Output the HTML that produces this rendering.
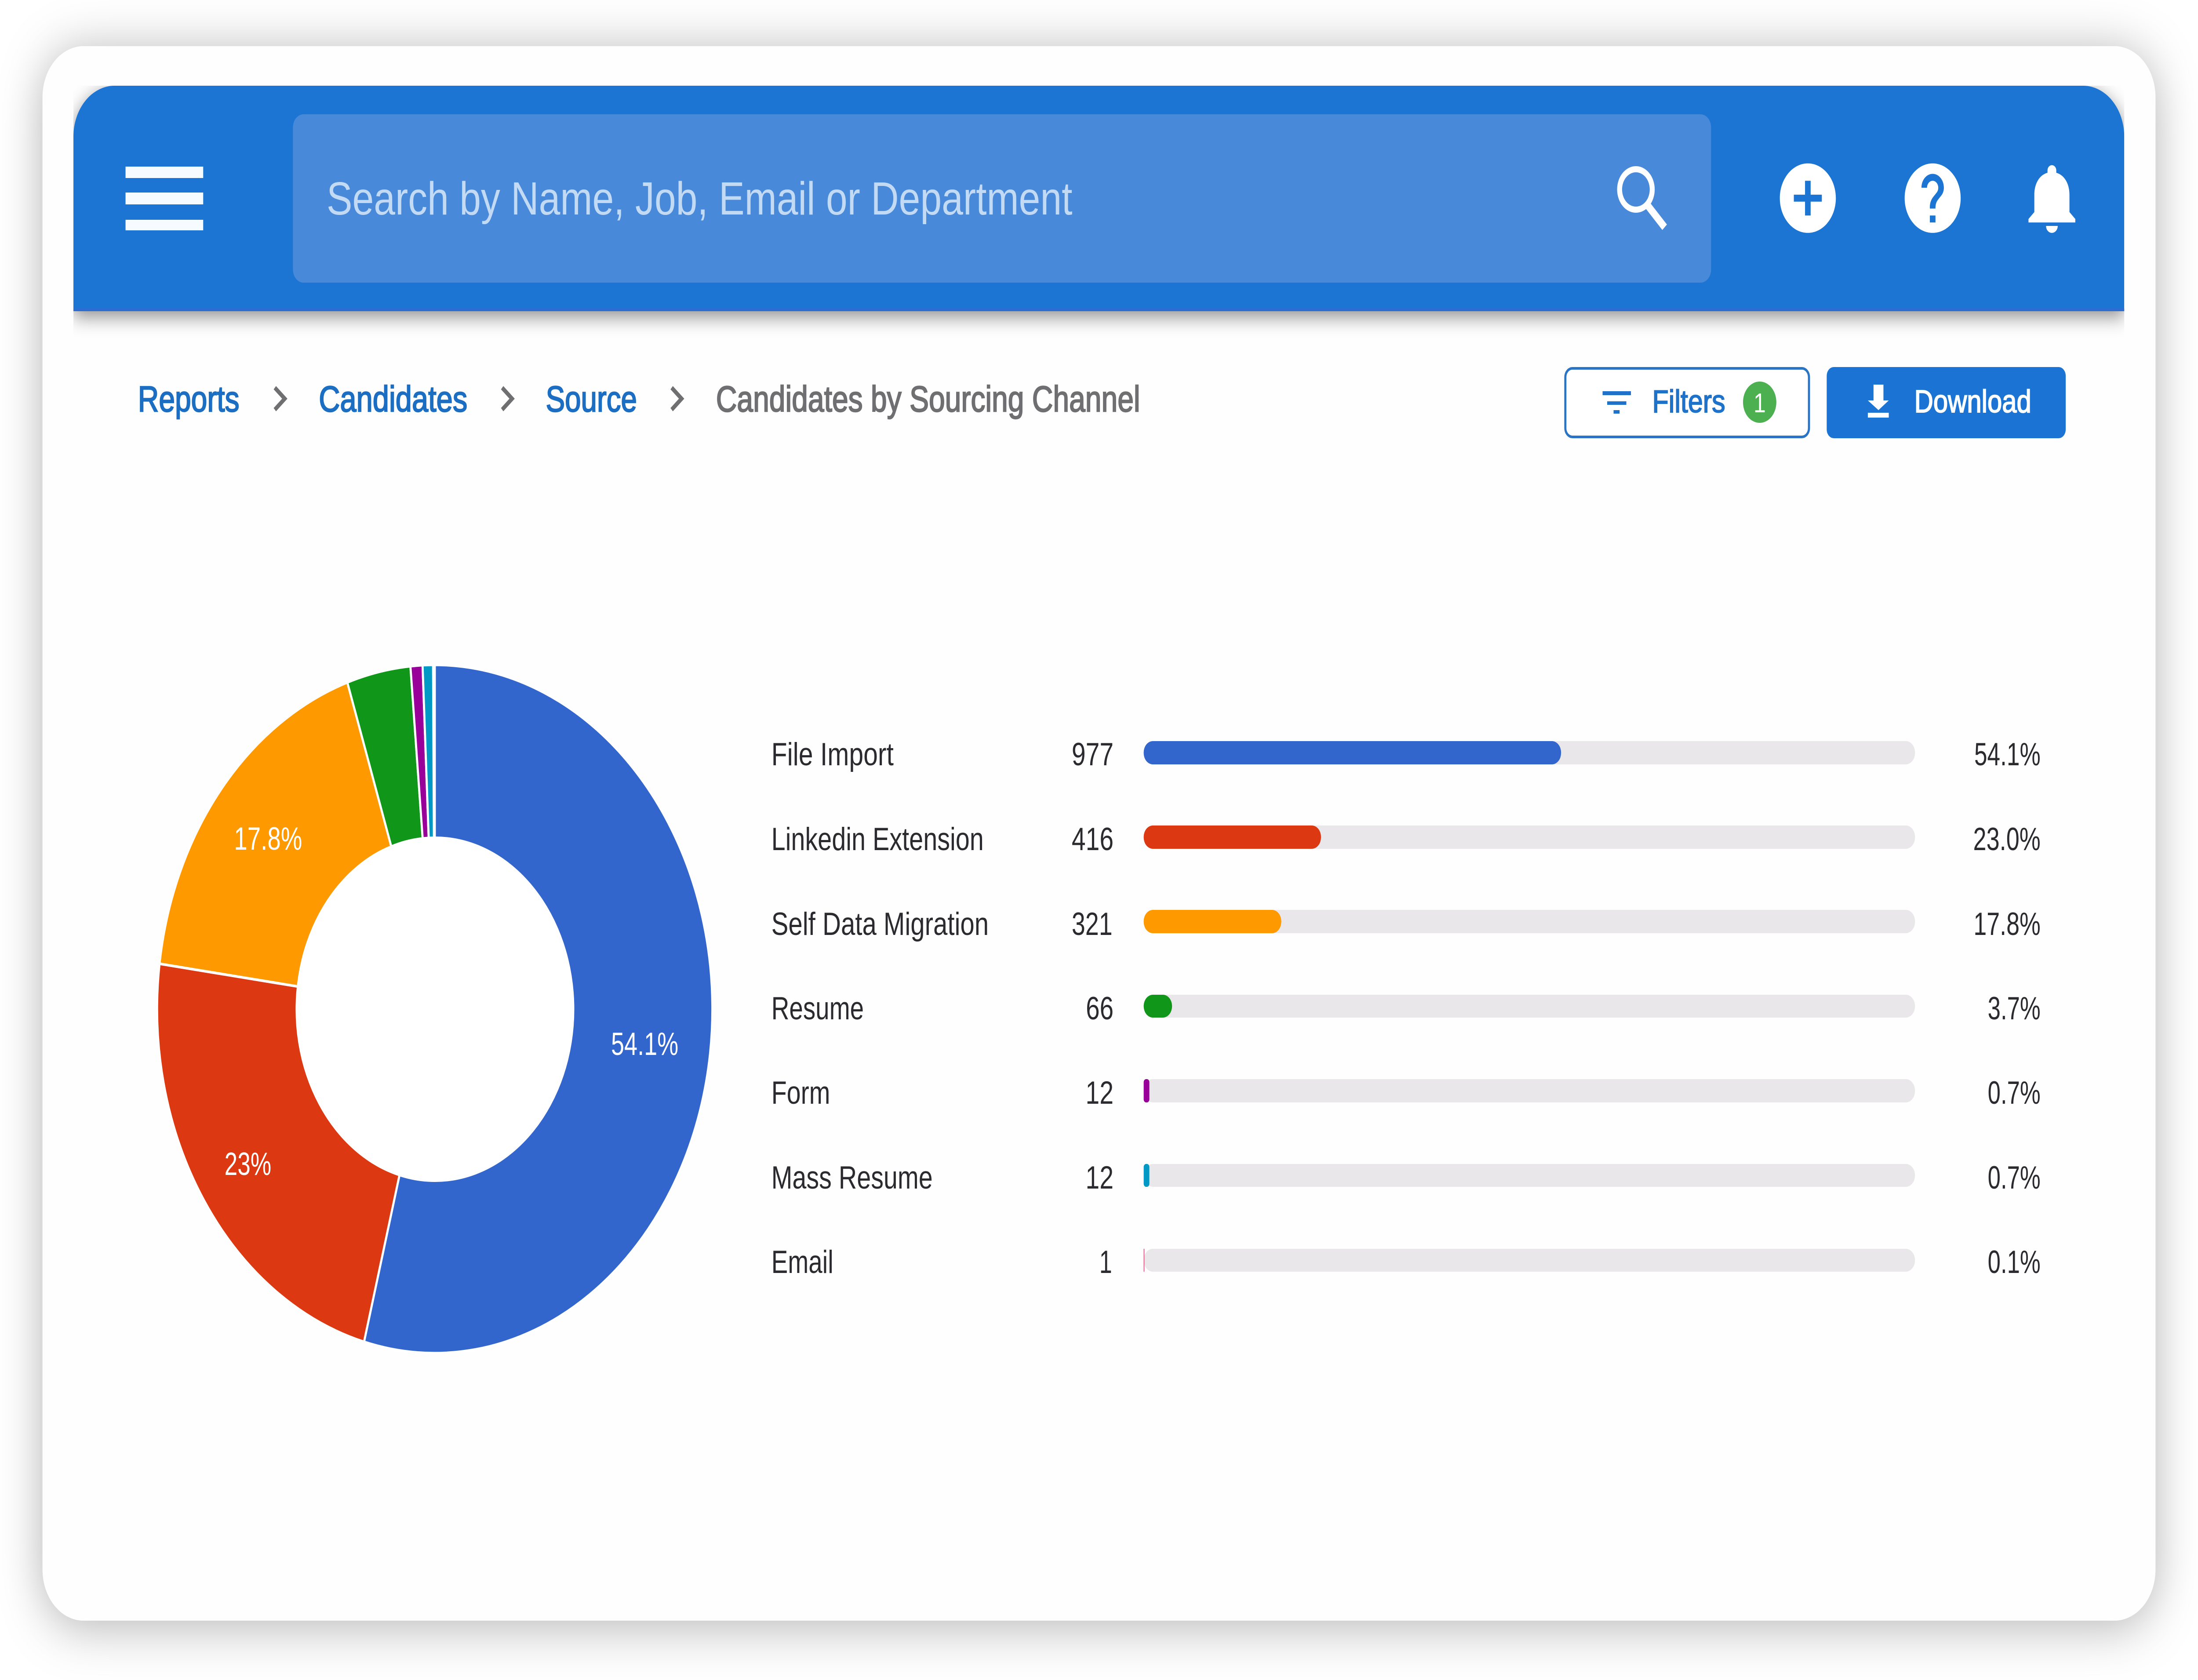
<!DOCTYPE html>
<html lang="en">
<head>
<meta charset="utf-8">
<title>Candidates by Sourcing Channel</title>
<style>
html,body{margin:0;padding:0;background:#fff;width:100%;height:100%;overflow:hidden}
svg{position:absolute;left:0;top:0;width:100%;height:100%;display:block}
text{font-family:"Liberation Sans",Arial,sans-serif}
</style>
</head>
<body>
<svg viewBox="0 0 6198 3822" preserveAspectRatio="none" xmlns="http://www.w3.org/2000/svg">
  <defs>
    <filter id="cardShadow" filterUnits="userSpaceOnUse" x="0" y="0" width="6198" height="3822">
      <feDropShadow dx="0" dy="12" stdDeviation="60" flood-color="#000" flood-opacity=".3"/>
    </filter>
    <filter id="headShadow" filterUnits="userSpaceOnUse" x="100" y="100" width="6000" height="800">
      <feDropShadow dx="0" dy="12" stdDeviation="22" flood-color="#000" flood-opacity=".45"/>
    </filter>
    <clipPath id="headClip"><rect x="207" y="195" width="5783" height="575"/></clipPath>
  </defs>

  <!-- card -->
  <rect x="120" y="105" width="5958" height="3582" rx="116" ry="116" fill="#fefefe" filter="url(#cardShadow)"/>

  <!-- header -->
  <g clip-path="url(#headClip)">
    <path d="M207 708V311A116 116 0 0 1 323 195H5874A116 116 0 0 1 5990 311V708Z" fill="#1b74d3" filter="url(#headShadow)"/>
  </g>
  <rect x="207" y="702" width="5783" height="6" fill="#2d6cd2"/>

  <!-- hamburger -->
  <rect x="354" y="379" width="219" height="26" fill="#f5fbff"/>
  <rect x="354" y="438" width="219" height="27" fill="#f5fbff"/>
  <rect x="354" y="500" width="219" height="24" fill="#f5fbff"/>

  <!-- search -->
  <rect x="826" y="260" width="3999" height="383" rx="30" fill="#4889d9"/>
  <text x="921" y="488" font-size="106" fill="#c3daf5" textLength="2103" lengthAdjust="spacingAndGlyphs">Search by Name, Job, Email or Department</text>
  <circle cx="4613" cy="431" r="46" fill="none" stroke="#fff" stroke-width="14"/>
  <path d="M4645 466L4694 517" fill="none" stroke="#fff" stroke-width="18"/>

  <!-- add -->
  <g transform="translate(5003,356) scale(7.9)"><path fill="#fff" d="M12 2C6.48 2 2 6.48 2 12s4.48 10 10 10 10-4.48 10-10S17.52 2 12 2zm5 11h-4v4h-2v-4H7v-2h4V7h2v4h4v2z"/></g>
  <!-- help -->
  <g transform="translate(5355,356) scale(7.9)"><path fill="#fff" d="M12 2C6.48 2 2 6.48 2 12s4.48 10 10 10 10-4.48 10-10S17.52 2 12 2zm1 17h-2v-2h2v2zm2.07-7.75l-.9.92C13.45 12.9 13 13.5 13 15h-2v-.5c0-1.1.45-2.1 1.17-2.83l1.24-1.26c.37-.36.59-.86.59-1.41 0-1.1-.9-2-2-2s-2 .9-2 2H8c0-2.21 1.79-4 4-4s4 1.79 4 4c0 .88-.36 1.68-.93 2.25z"/></g>
  <!-- bell -->
  <g transform="translate(5687,356) scale(8.25,7.9)"><path fill="#fff" d="M12 22c1.1 0 2-.9 2-2h-4c0 1.1.9 2 2 2zm6-6v-5c0-3.07-1.64-5.64-4.5-6.32V4c0-.83-.67-1.5-1.5-1.5s-1.5.67-1.5 1.5v.68C7.63 5.36 6 7.92 6 11v5l-2 2v1h16v-1l-2-2z"/></g>

  <!-- breadcrumbs -->
  <g font-size="83" fill="#1b6ec2" stroke="#1b6ec2" stroke-width="2.4">
    <text x="389" y="936" textLength="286" lengthAdjust="spacingAndGlyphs">Reports</text>
    <text x="899" y="936" textLength="419" lengthAdjust="spacingAndGlyphs">Candidates</text>
    <text x="1539" y="936" textLength="257" lengthAdjust="spacingAndGlyphs">Source</text>
  </g>
  <text x="2019" y="936" font-size="83" fill="#6f6f72" stroke="#6f6f72" stroke-width="2.4" textLength="1196" lengthAdjust="spacingAndGlyphs">Candidates by Sourcing Channel</text>
  <g fill="none" stroke="#6f6f72" stroke-width="10">
    <path d="M775 882L803 907L775 932"/>
    <path d="M1416 882L1444 907L1416 932"/>
    <path d="M1894 882L1922 907L1894 932"/>
  </g>

  <!-- filters button -->
  <rect x="4414" y="838" width="687" height="156" rx="20" fill="#fff" stroke="#2a74c5" stroke-width="6"/>
  <rect x="4519" y="890" width="80" height="9" fill="#1f72c9"/>
  <rect x="4532" y="913" width="54" height="8" fill="#1f72c9"/>
  <rect x="4550" y="933" width="17" height="8" fill="#1f72c9"/>
  <text x="4659" y="938" font-size="72" fill="#1f72c9" stroke="#1f72c9" stroke-width="2" textLength="206" lengthAdjust="spacingAndGlyphs">Filters</text>
  <circle cx="4962" cy="915" r="47" fill="#4caf50"/>
  <text x="4962" y="938" font-size="62" fill="#fff" text-anchor="middle">1</text>

  <!-- download button -->
  <rect x="5151" y="835" width="674" height="162" rx="20" fill="#1b74d3"/>
  <path fill="#fff" d="M5283 875H5311V911H5326L5297 933L5267 911H5283Z"/>
  <rect x="5267" y="939" width="59" height="11" fill="#fff"/>
  <text x="5398" y="938" font-size="72" fill="#fff" stroke="#fff" stroke-width="2" textLength="330" lengthAdjust="spacingAndGlyphs">Download</text>

  <!-- donut -->
  <g stroke="#fff" stroke-width="6" stroke-linejoin="round">
    <path fill="#3366cc" d="M1226 2295.5L1226 1512.5A783 783 0 1 1 1026.5 3052.7Z"/>
    <path fill="#dc3912" d="M1226 2295.5L1026.5 3052.7A783 783 0 0 1 449.8 2192.5Z"/>
    <path fill="#ff9900" d="M1226 2295.5L449.8 2192.5A783 783 0 0 1 979.4 1552.4Z"/>
    <path fill="#109618" d="M1226 2295.5L979.4 1552.4A783 783 0 0 1 1157.3 1515.6Z"/>
    <path fill="#990099" d="M1226 2295.5L1157.3 1515.6A783 783 0 0 1 1191.5 1513.3Z"/>
    <path fill="#0099c6" d="M1226 2295.5L1191.5 1513.3A783 783 0 0 1 1221.1 1512.5Z"/>
  </g>
  <circle cx="1226.5" cy="2296" r="393" fill="#fff"/>
  <g font-size="73" fill="#fff">
    <text x="1723" y="2400" textLength="190" lengthAdjust="spacingAndGlyphs">54.1%</text>
    <text x="633" y="2673" textLength="132" lengthAdjust="spacingAndGlyphs">23%</text>
    <text x="660" y="1933" textLength="192" lengthAdjust="spacingAndGlyphs">17.8%</text>
  </g>

  <!-- tracks -->
  <g fill="#e9e7ea">
    <rect x="3225" y="1686" width="2175" height="53" rx="26"/>
    <rect x="3225" y="1878" width="2175" height="53" rx="26"/>
    <rect x="3225" y="2070" width="2175" height="53" rx="26"/>
    <rect x="3225" y="2263" width="2175" height="52" rx="26"/>
    <rect x="3225" y="2455" width="2175" height="53" rx="26"/>
    <rect x="3225" y="2648" width="2175" height="52" rx="26"/>
    <rect x="3225" y="2841" width="2175" height="52" rx="26"/>
  </g>
  <!-- fills -->
  <rect x="3225" y="1686" width="1177" height="53" rx="26" fill="#3366cc"/>
  <rect x="3225" y="1878" width="500" height="53" rx="26" fill="#dc3912"/>
  <rect x="3225" y="2070" width="388" height="53" rx="26" fill="#ff9900"/>
  <rect x="3225" y="2263" width="80" height="52" rx="26" fill="#109618"/>
  <rect x="3225" y="2455" width="16" height="53" rx="7" fill="#990099"/>
  <rect x="3225" y="2648" width="16" height="52" rx="7" fill="#0099c6"/>
  <rect x="3225" y="2841" width="2" height="52" fill="#dd4477"/>

  <!-- labels -->
  <g font-size="73" fill="#2a2a2f">
    <text x="2175" y="1741" textLength="345" lengthAdjust="spacingAndGlyphs">File Import</text>
    <text x="2175" y="1934" textLength="599" lengthAdjust="spacingAndGlyphs">Linkedin Extension</text>
    <text x="2175" y="2127" textLength="613" lengthAdjust="spacingAndGlyphs">Self Data Migration</text>
    <text x="2175" y="2319" textLength="261" lengthAdjust="spacingAndGlyphs">Resume</text>
    <text x="2175" y="2511" textLength="166" lengthAdjust="spacingAndGlyphs">Form</text>
    <text x="2175" y="2704" textLength="455" lengthAdjust="spacingAndGlyphs">Mass Resume</text>
    <text x="2175" y="2896" textLength="175" lengthAdjust="spacingAndGlyphs">Email</text>

    <text x="3022" y="1741" textLength="118" lengthAdjust="spacingAndGlyphs">977</text>
    <text x="3022" y="1934" textLength="118" lengthAdjust="spacingAndGlyphs">416</text>
    <text x="3022" y="2127" textLength="115" lengthAdjust="spacingAndGlyphs">321</text>
    <text x="3062" y="2319" textLength="78" lengthAdjust="spacingAndGlyphs">66</text>
    <text x="3061" y="2511" textLength="79" lengthAdjust="spacingAndGlyphs">12</text>
    <text x="3061" y="2704" textLength="79" lengthAdjust="spacingAndGlyphs">12</text>
    <text x="3100" y="2896" textLength="36" lengthAdjust="spacingAndGlyphs">1</text>

    <text x="5567" y="1741" textLength="187" lengthAdjust="spacingAndGlyphs">54.1%</text>
    <text x="5564" y="1934" textLength="190" lengthAdjust="spacingAndGlyphs">23.0%</text>
    <text x="5565" y="2127" textLength="189" lengthAdjust="spacingAndGlyphs">17.8%</text>
    <text x="5605" y="2319" textLength="149" lengthAdjust="spacingAndGlyphs">3.7%</text>
    <text x="5605" y="2511" textLength="149" lengthAdjust="spacingAndGlyphs">0.7%</text>
    <text x="5605" y="2704" textLength="149" lengthAdjust="spacingAndGlyphs">0.7%</text>
    <text x="5605" y="2896" textLength="149" lengthAdjust="spacingAndGlyphs">0.1%</text>
  </g>
</svg>
</body>
</html>
